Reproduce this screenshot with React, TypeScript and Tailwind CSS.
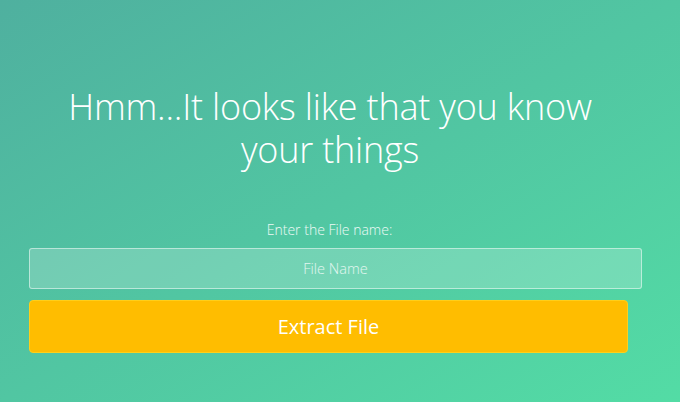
import React from "react";

export default function App() {
  return (
    <div
      className="w-[680px] h-[402px] overflow-hidden bg-[linear-gradient(to_bottom_right,#4fb09f_0%,#53dca5_100%)] text-white"
      style={{ fontFamily: '"Open Sans", "Liberation Sans", sans-serif' }}
    >
      <div className="pt-[85px] flex flex-col">
        <h1 className="ml-[40px] w-[580px] text-center text-[36px] leading-[43px] font-light tracking-[-0.2px]">
          Hmm...It looks like that you know your things
        </h1>
        <p className="mt-[50px] ml-[29px] w-[601px] text-center text-[14px] leading-[18px] font-light text-white/90">
          Enter the File name:
        </p>
        <div className="mt-[9px] ml-[29px] w-[613px] h-[41px] rounded-[3px] border border-white/50 bg-white/20 flex items-center justify-center">
          <span className="text-[14.5px] font-light text-white/80">File Name</span>
        </div>
        <button className="mt-[11px] ml-[29px] w-[599px] h-[53px] rounded-[4px] border border-[#ffcf1a] bg-[#ffbd00] text-[20px] text-white flex items-center justify-center">
          Extract File
        </button>
      </div>
    </div>
  );
}
